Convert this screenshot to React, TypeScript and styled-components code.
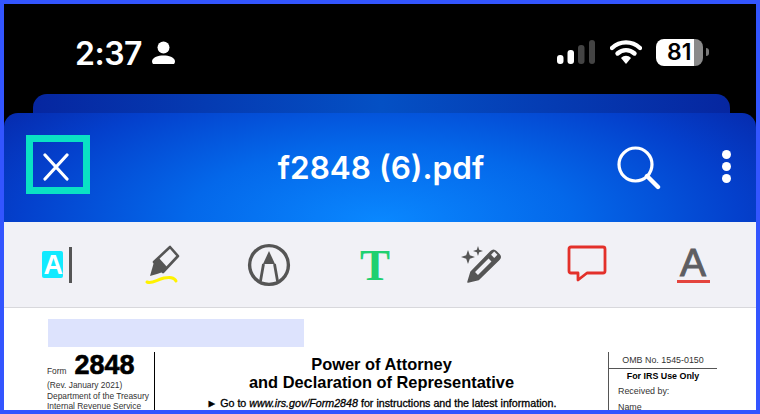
import { createGlobalStyle, styled } from 'styled-components';

const GlobalStyle = createGlobalStyle`
  html, body {
    margin: 0;
    padding: 0;
    background: #000;
  }
`;

const App = () => (
  <Frame>
    <GlobalStyle />
    <StatusBar>
      <StatusLeft>
        <Time>2:37</Time>
        <svg width="23" height="24" viewBox="0 0 23 24">
          <circle cx="11.5" cy="6.5" r="6" fill="#fff" />
          <path d="M1 23 Q0 22 0 20 C1 16 6 14.5 11.5 14.5 C17 14.5 22 16 23 20 Q23 22 22 23 Z" fill="#fff" />
        </svg>
      </StatusLeft>
      <StatusRight>
        <svg width="38" height="25" viewBox="0 0 38 25">
          <rect x="0" y="15" width="6.5" height="9" rx="3" fill="#fff" />
          <rect x="10.5" y="10" width="6.5" height="14" rx="3" fill="#fff" />
          <rect x="21" y="5" width="6.5" height="19" rx="3" fill="#444" />
          <rect x="32" y="0" width="6" height="24" rx="3" fill="#444" />
        </svg>
        <svg width="32" height="25" viewBox="0 0 32 25">
          <path d="M2 8 C10 0.5 22 0.5 30 8" fill="none" stroke="#fff" strokeWidth="4.4" strokeLinecap="round" />
          <path d="M7.5 13.5 C12.5 9 19.5 9 24.5 13.5" fill="none" stroke="#fff" strokeWidth="4.4" strokeLinecap="round" />
          <path d="M11 18 C14 15 18 15 21 18 L16 24 Z" fill="#fff" />
        </svg>
        <BatteryWrap>
          <Battery>81</Battery>
          <BatteryNub />
        </BatteryWrap>
      </StatusRight>
    </StatusBar>
    <BackSheet />
    <Header>
      <CloseBox>
        <svg width="26" height="28" viewBox="0 0 26 28">
          <path d="M2 2 L24 26 M24 2 L2 26" stroke="#fff" strokeWidth="3.2" strokeLinecap="round" />
        </svg>
      </CloseBox>
      <Title>f2848 (6).pdf</Title>
      <HeaderActions>
        <SearchIcon width="44" height="44" viewBox="0 0 44 44">
          <circle cx="18.5" cy="18.5" r="16.5" fill="none" stroke="#fff" strokeWidth="3.2" />
          <path d="M30 30 L41 41" stroke="#fff" strokeWidth="4.4" strokeLinecap="round" />
        </SearchIcon>
        <MoreDots>
          <span />
          <span />
          <span />
        </MoreDots>
      </HeaderActions>
    </Header>
    <Toolbar>
      <ToolSlot>
        <SelectSwatch>A</SelectSwatch>
        <Caret />
      </ToolSlot>
      <ToolSlot>
        <svg width="40" height="44" viewBox="0 0 40 44">
          <path d="M27 4 L35 13 L20 29 L11 19 Z" fill="none" stroke="#555" strokeWidth="2.6" strokeLinejoin="round" />
          <path d="M11 19 L20 29 L14 31 L7 33 L9 26 Z" fill="#555" />
          <path d="M20 29 L11 19 L15.5 14.5 L24.5 24.5 Z" fill="#555" />
          <path d="M4 39 C9 41 13 37 21 35 C27 34 31 34 33 38" fill="none" stroke="#fff200" strokeWidth="3" strokeLinecap="round" />
        </svg>
      </ToolSlot>
      <ToolSlot>
        <svg width="44" height="44" viewBox="0 0 44 44">
          <circle cx="22" cy="22" r="19.4" fill="none" stroke="#555" strokeWidth="3.4" />
          <path d="M22 8 L28 21 L16 21 Z" fill="#555" />
          <path d="M16.5 21 L13.5 38 M27.5 21 L30.5 38" stroke="#555" strokeWidth="2.8" />
        </svg>
      </ToolSlot>
      <ToolSlot>
        <TextTool>T</TextTool>
      </ToolSlot>
      <ToolSlot>
        <svg width="44" height="44" viewBox="0 0 44 44">
          <path d="M9 39 L12 29 L32 8.5 Q34.5 6 37 8.5 L40 11.5 Q42.5 14 40 16.5 L19.5 36.5 Z" fill="#555" stroke="#555" strokeWidth="1.5" strokeLinejoin="round" />
          <path d="M17.5 30.5 L31 17" stroke="#f1f1f6" strokeWidth="4" />
          <rect x="33" y="9.5" width="4.5" height="4.5" transform="rotate(45 35.25 11.75)" fill="#f1f1f6" />
          <path d="M9 7 L10.8 12.2 L16 14 L10.8 15.8 L9 21 L7.2 15.8 L2 14 L7.2 12.2 Z" fill="#555" />
          <path d="M19 3 L20.2 6.8 L24 8 L20.2 9.2 L19 13 L17.8 9.2 L14 8 L17.8 6.8 Z" fill="#555" />
        </svg>
      </ToolSlot>
      <ToolSlot>
        <svg width="44" height="44" viewBox="0 0 44 44">
          <path d="M6 4 H38 Q40 4 40 6 V28 Q40 30 38 30 H22 L13 37 V30 H6 Q4 30 4 28 V6 Q4 4 6 4 Z" fill="none" stroke="#e3302a" strokeWidth="2.8" strokeLinejoin="round" />
        </svg>
      </ToolSlot>
      <ToolSlot>
        <TextStyleTool>A</TextStyleTool>
      </ToolSlot>
    </Toolbar>
    <Page>
      <FieldHighlight />
      <FormHead>
        <FormId>
          <FormNumber>
            <small>Form</small>
            <strong>2848</strong>
          </FormNumber>
          <div>(Rev. January 2021)</div>
          <Dept>Department of the Treasury</Dept>
          <div>Internal Revenue Service</div>
        </FormId>
        <FormTitle>
          <h1>
            Power of Attorney
            <br />
            and Declaration of Representative
          </h1>
          <p>
            ► Go to <em>www.irs.gov/Form2848</em> for instructions and the latest information.
          </p>
        </FormTitle>
        <FormMeta>
          <Omb>OMB No. 1545-0150</Omb>
          <IrsOnly>For IRS Use Only</IrsOnly>
          <Received>Received by:</Received>
          <Received>Name</Received>
        </FormMeta>
      </FormHead>
    </Page>
  </Frame>
);

const Frame = styled.div`
  width: 760px;
  height: 414px;
  box-sizing: border-box;
  border: 4px solid #3355ff;
  background: #000;
  overflow: hidden;
  display: flex;
  flex-direction: column;
  font-family: Inter, 'Liberation Sans', sans-serif;
`;

const StatusBar = styled.div`
  height: 90px;
  flex: none;
  box-sizing: border-box;
  padding: 36px 47px 0 71px;
  display: flex;
  justify-content: space-between;
  align-items: flex-start;
  color: #fff;
`;

const StatusLeft = styled.div`
  display: flex;
  align-items: center;
  gap: 10.5px;
  height: 26px;
`;

const Time = styled.span`
  font-size: 32px;
  font-weight: 600;
  line-height: 26px;
  letter-spacing: -0.5px;
  margin-top: 1px;
`;

const StatusRight = styled.div`
  display: flex;
  align-items: center;
  gap: 15px;
  height: 26px;
  margin-top: -1px;
`;

const BatteryWrap = styled.div`
  display: flex;
  align-items: center;
  gap: 3px;
  margin-left: -1px;
`;

const Battery = styled.div`
  width: 47px;
  height: 27px;
  border-radius: 8px;
  background: linear-gradient(90deg, #fff 0 38px, #8a8a8a 38px);
  color: #000;
  font-size: 23px;
  font-weight: 600;
  line-height: 27px;
  padding-left: 11px;
  box-sizing: border-box;
`;

const BatteryNub = styled.div`
  width: 3px;
  height: 8px;
  border-radius: 0 4px 4px 0;
  background: #777;
`;

const BackSheet = styled.div`
  flex: none;
  height: 19px;
  margin: 0 26px 0 29px;
  border-radius: 14px 14px 0 0;
  background: linear-gradient(90deg, #0626a0 0%, #0450c4 50%, #0626a0 100%);
`;

const Header = styled.header`
  flex: none;
  height: 109px;
  box-sizing: border-box;
  padding: 0 25px 6px 22px;
  display: grid;
  grid-template-columns: 1fr auto 1fr;
  align-items: center;
  border-radius: 14px 14px 0 0;
  background: radial-gradient(ellipse 480px 190px at 50% 100%, #0a88ff 0%, #0468ea 40%, #0440cc 75%, #0628aa 100%);
`;

const CloseBox = styled.div`
  width: 64px;
  height: 59px;
  box-sizing: border-box;
  border: 7px solid #0ae2c4;
  display: flex;
  align-items: center;
  justify-content: center;
  justify-self: start;

  svg {
    margin: 4px 4px 0 0;
  }
`;

const Title = styled.div`
  color: #fff;
  font-size: 31.5px;
  font-weight: 600;
  line-height: 38px;
  white-space: nowrap;
  margin: 6px 0 0 5px;
`;

const HeaderActions = styled.div`
  display: flex;
  align-items: center;
  justify-content: flex-end;
  gap: 61px;
`;

const SearchIcon = styled.svg`
  margin-top: 6px;
`;

const MoreDots = styled.div`
  display: flex;
  flex-direction: column;
  gap: 3px;
  margin-top: 4px;

  span {
    display: block;
    width: 9px;
    height: 9px;
    border-radius: 50%;
    background: #fff;
  }
`;

const Toolbar = styled.div`
  flex: none;
  height: 86px;
  box-sizing: border-box;
  display: grid;
  grid-template-columns: repeat(7, 106px);
  align-items: center;
  background: #f1f1f6;
  border-bottom: 1px solid #d8d8dc;
`;

const ToolSlot = styled.div`
  display: flex;
  justify-content: center;
  align-items: center;
  gap: 6px;
`;

const SelectSwatch = styled.div`
  width: 21px;
  height: 27px;
  border-radius: 2px;
  background: #12eaff;
  color: #fff;
  font: 700 27px/29px 'Liberation Sans', sans-serif;
  display: flex;
  justify-content: flex-end;
`;

const Caret = styled.div`
  width: 3px;
  height: 36px;
  background: #555;
`;

const TextTool = styled.div`
  color: #1fd070;
  font: 700 45px/44px 'Liberation Serif', serif;
  height: 44px;
`;

const TextStyleTool = styled.div`
  width: 33px;
  height: 36px;
  box-sizing: border-box;
  text-align: center;
  color: #5e5e62;
  font: 400 39px/31px 'Liberation Sans', sans-serif;
  -webkit-text-stroke: 1px #5e5e62;
  border-bottom: 3px solid #e4443e;
`;

const Page = styled.div`
  flex: 1;
  min-height: 0;
  overflow: hidden;
  background: #fff;
  padding: 11px 0 0 43px;
  color: #000;
  font-family: 'Liberation Sans', Arial, sans-serif;
`;

const FieldHighlight = styled.div`
  width: 256px;
  height: 28px;
  background: #dde3fd;
  margin-left: 1px;
`;

const FormHead = styled.div`
  display: grid;
  grid-template-columns: 108px 453px 109px;
  margin-top: 5px;
`;

const FormId = styled.div`
  height: 70px;
  box-sizing: border-box;
  border-right: 1.5px solid #000;
  font-size: 8.4px;
  line-height: 10px;
  color: #333;
`;

const FormNumber = styled.div`
  display: flex;
  align-items: baseline;
  gap: 8px;
  height: 28px;

  small {
    font-size: 8.4px;
  }

  strong {
    font-size: 27px;
    line-height: 27px;
    font-weight: 700;
    color: #000;
    -webkit-text-stroke: 0.6px #000;
  }
`;

const Dept = styled.div`
  margin-top: 1px;
`;

const FormTitle = styled.div`
  text-align: center;
  padding-top: 3px;

  h1 {
    margin: 0;
    font-size: 16.4px;
    line-height: 18px;
    font-weight: 700;
  }

  p {
    margin: 6px 0 0;
    font-size: 10.7px;
    line-height: 12px;
    font-weight: 400;
    -webkit-text-stroke: 0.3px #000;
  }

  em {
    font-style: italic;
  }
`;

const FormMeta = styled.div`
  height: 70px;
  border-left: 1.5px solid #555;
  font-size: 8.9px;
  color: #333;
`;

const Omb = styled.div`
  height: 16px;
  line-height: 16px;
  text-align: center;
  border-bottom: 1px solid #555;
`;

const IrsOnly = styled.div`
  font-weight: 700;
  color: #000;
  text-align: center;
  line-height: 13px;
  margin-top: 1px;
`;

const Received = styled.div`
  padding-left: 9px;
  line-height: 16px;
`;

export default App;
